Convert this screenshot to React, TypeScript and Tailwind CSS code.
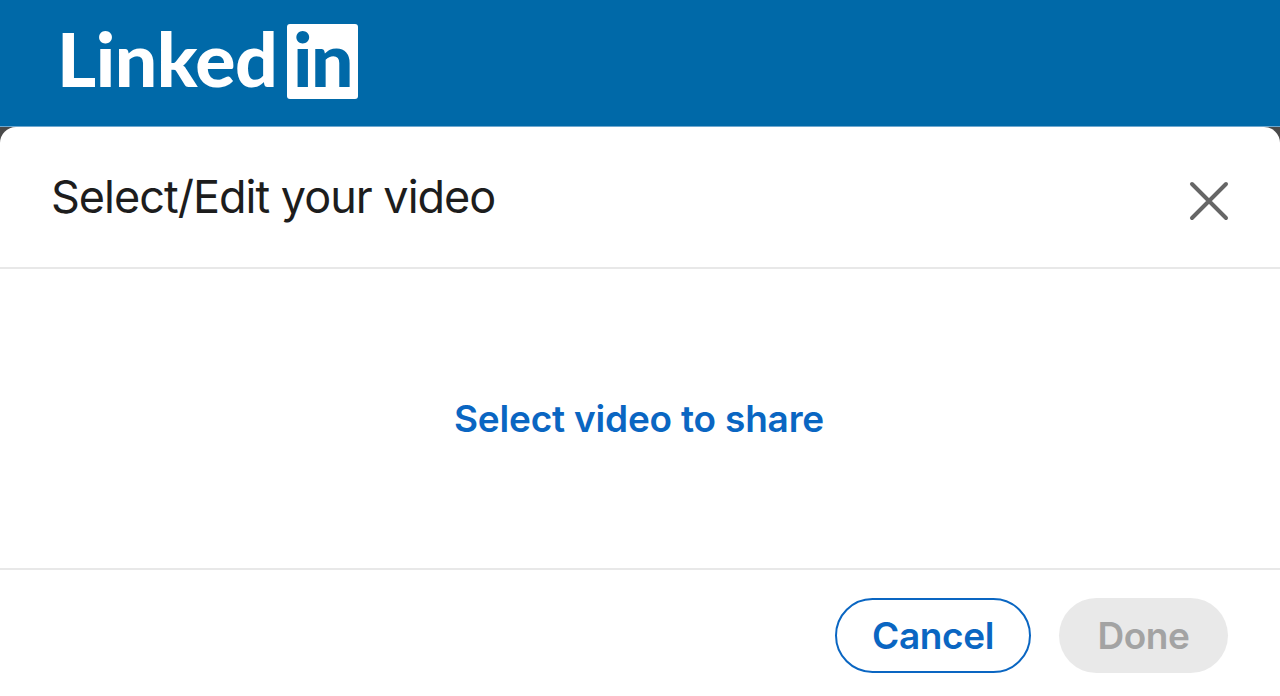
import React from 'react';

const App: React.FC = () => {
  return (
    <div className="flex h-[696px] w-[1280px] flex-col overflow-hidden bg-[#4a4a4a] font-['Inter',sans-serif]">
      {/* Header */}
      <header className="flex h-[127px] flex-shrink-0 items-center border-b border-[#6fa8cf] bg-[#0069a8] pl-[57px] font-['Lato',sans-serif]">
        <div className="mb-[3px] flex h-[75px] items-end">
          <span className="mb-[3px] w-[218px] text-[75px] leading-[75px] font-black tracking-[-0.5px] text-white">Linked</span>
          <span className="ml-[12px] flex h-[75px] w-[71px] items-end justify-center rounded-[3px] bg-white pb-[3px] text-[75px] leading-[75px] font-black tracking-[-1.5px] text-[#0069a8]">
            in
          </span>
        </div>
      </header>

      {/* Modal */}
      <main className="flex min-h-0 flex-1 flex-col rounded-t-[16px] bg-white">
        <div className="flex h-[142px] flex-shrink-0 items-center justify-between border-b-2 border-[#e8e8e8] pr-[51px] pl-[51px]">
          <h2 className="mb-[2px] text-[45px] leading-none font-normal tracking-[-1px] text-[#1d1d1d]">Select/Edit your video</h2>
          <button aria-label="Close" className="mt-[8px] text-[#666666]">
            <svg width="40" height="40" viewBox="0 0 40 40" fill="none" stroke="currentColor" strokeWidth="4" strokeLinecap="round">
              <path d="M3 3 L37 37 M37 3 L3 37" />
            </svg>
          </button>
        </div>

        <div className="flex h-[301px] flex-shrink-0 items-center justify-center border-b-2 border-[#e8e8e8]">
          <button className="mr-[2px] text-[37px] leading-none font-semibold tracking-[-0.2px] text-[#0a66c2]">Select video to share</button>
        </div>

        <div className="flex flex-1 items-start justify-end gap-[28px] pt-[28px] pr-[52px]">
          <button className="flex h-[75px] w-[196px] items-center justify-center rounded-full border-2 border-[#0a66c2] text-[37px] leading-none font-semibold tracking-[-0.4px] text-[#0a66c2]">
            Cancel
          </button>
          <button className="flex h-[75px] w-[169px] items-center justify-center rounded-full bg-[#e9e9e9] text-[37px] leading-none font-semibold tracking-[-0.4px] text-[#a3a3a3]">
            Done
          </button>
        </div>
      </main>
    </div>
  );
};

export default App;
